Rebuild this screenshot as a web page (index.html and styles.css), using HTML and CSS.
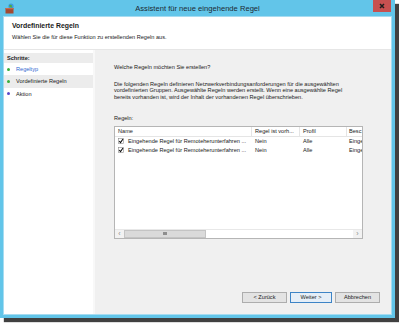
FILE: index.html
```html
<!DOCTYPE html>
<html lang="de">
<head>
  <meta charset="UTF-8">
  <title>Assistent für neue eingehende Regel</title>
  <link rel="stylesheet" href="styles.css">
</head>
<body>
  <div class="window">
    <div class="titlebar">
      <svg class="app-icon" width="10" height="11" viewBox="0 0 10 11">
        <circle cx="6" cy="3.2" r="2.6" fill="#3d9be0"/>
        <path d="M4.2 2.2 Q5.6 1 7 2.4 Q6.2 3.6 7.6 4.4 Q5.4 5 4.4 3.6 Z" fill="#4caf3e"/>
        <rect x="0.5" y="5" width="8" height="5.5" fill="#a34a32"/>
        <rect x="0.5" y="5" width="8" height="1.2" fill="#c9694c"/>
      </svg>
      <div class="title">Assistent für neue eingehende Regel</div>
      <div class="close">
        <svg width="6" height="6" viewBox="0 0 6 6">
          <path d="M1 1 L5 5 M5 1 L1 5" stroke="#1e1e1e" stroke-width="1.5"/>
        </svg>
      </div>
    </div>

    <div class="frame">
      <div class="head">
        <div class="head-title">Vordefinierte Regeln</div>
        <div class="head-sub">Wählen Sie die für diese Funktion zu erstellenden Regeln aus.</div>
      </div>

      <div class="body">
        <div class="steps">
          <div class="steps-title">Schritte:</div>
          <div class="step link"><span class="dot green"></span>Regeltyp</div>
          <div class="step current"><span class="dot green"></span>Vordefinierte Regeln</div>
          <div class="step"><span class="dot purple"></span>Aktion</div>
        </div>

        <div class="main">
          <p class="question">Welche Regeln möchten Sie erstellen?</p>
          <p class="info">Die folgenden Regeln definieren Netzwerkverbindungsanforderungen für die ausgewählten<br>vordefinierten Gruppen. Ausgewählte Regeln werden erstellt. Wenn eine ausgewählte Regel<br>bereits vorhanden ist, wird der Inhalt der vorhandenen Regel überschrieben.</p>
          <div class="label">Regeln:</div>

          <div class="list">
            <div class="row list-head">
              <div class="col c1">Name</div>
              <div class="col c2">Regel ist vorh...</div>
              <div class="col c3">Profil</div>
              <div class="col c4">Besc</div>
            </div>
            <div class="row">
              <div class="col c1">
                <svg class="check" width="6" height="6" viewBox="0 0 6 6">
                  <rect x="0.5" y="0.5" width="5" height="5" fill="#fff" stroke="#8a8a8a" stroke-width="0.6"/>
                  <path d="M1.2 3 L2.5 4.5 L5 1" fill="none" stroke="#111" stroke-width="1.1"/>
                </svg>Eingehende Regel für Remoteherunterfahren ...</div>
              <div class="col c2">Nein</div>
              <div class="col c3">Alle</div>
              <div class="col c4">Einge</div>
            </div>
            <div class="row">
              <div class="col c1">
                <svg class="check" width="6" height="6" viewBox="0 0 6 6">
                  <rect x="0.5" y="0.5" width="5" height="5" fill="#fff" stroke="#8a8a8a" stroke-width="0.6"/>
                  <path d="M1.2 3 L2.5 4.5 L5 1" fill="none" stroke="#111" stroke-width="1.1"/>
                </svg>Eingehende Regel für Remoteherunterfahren ...</div>
              <div class="col c2">Nein</div>
              <div class="col c3">Alle</div>
              <div class="col c4">Einge</div>
            </div>
            <div class="list-fill"></div>
            <div class="hscroll">
              <div class="arrow">&#8249;</div>
              <div class="track">
                <div class="thumb"><span class="grip"></span></div>
              </div>
              <div class="arrow">&#8250;</div>
            </div>
          </div>

          <div class="buttons">
            <div class="btn back">&lt; Zurück</div>
            <div class="btn next">Weiter &gt;</div>
            <div class="btn cancel">Abbrechen</div>
          </div>
        </div>
      </div>
    </div>
  </div>
</body>
</html>
```

FILE: styles.css
```css
* {
  margin: 0;
  padding: 0;
  box-sizing: border-box;
}
body {
  width: 399px;
  height: 323px;
  background: #fff;
  font-family: 'Liberation Sans', Arial, sans-serif;
  font-size: 5.6px;
  color: #1a1a1a;
  overflow: hidden;
}
.window {
  width: 395px;
  height: 318px;
  background: #62c5e9;
  display: flex;
  flex-direction: column;
  box-shadow: 4px 4px 1px rgba(30, 30, 30, 0.85);
}
.titlebar {
  height: 17px;
  display: grid;
  grid-template-columns: 1fr auto 1fr;
  align-items: start;
}
.app-icon {
  margin: 3px 0 0 5px;
}
.title {
  font-size: 7.6px;
  line-height: 17px;
  color: #1c2a33;
}
.close {
  justify-self: end;
  width: 18px;
  height: 12px;
  margin-right: 4px;
  background: #c75050;
  display: flex;
  align-items: center;
  justify-content: center;
}
.frame {
  flex: 1;
  margin: 0 4px 4px 4px;
  display: flex;
  flex-direction: column;
  box-shadow: 0 0 0 1px #a6dcf1;
}
.head {
  height: 33px;
  background: #fff;
  padding: 4px 8px 0;
  border-bottom: 1px solid #e6e6e6;
}
.head-title {
  font-weight: bold;
  font-size: 6.9px;
  line-height: 9px;
}
.head-sub {
  margin-top: 4px;
  line-height: 7px;
}
.body {
  flex: 1;
  display: flex;
}
.steps {
  width: 91px;
  background: #fff;
  border-right: 2px solid #f8f8f8;
  padding-top: 3px;
}
.steps-title {
  height: 10px;
  line-height: 10px;
  background: #ececec;
  font-weight: bold;
  padding-left: 3px;
}
.step {
  height: 12.3px;
  line-height: 12.3px;
  padding-left: 3px;
  display: flex;
  align-items: center;
}
.step.link {
  color: #2f68d0;
}
.step.current {
  background: #ececec;
}
.dot {
  width: 3px;
  height: 3px;
  border-radius: 50%;
  margin-right: 6px;
}
.dot.green {
  background: #3aae3a;
}
.dot.purple {
  background: #5848c8;
}
.main {
  flex: 1;
  background: #f0f0f0;
  padding: 14px 11px 11px 19px;
  display: flex;
  flex-direction: column;
}
.question {
  line-height: 7px;
}
.info {
  margin-top: 10px;
  line-height: 6.3px;
}
.label {
  margin-top: 15.5px;
  line-height: 7px;
}
.list {
  margin-top: 3.5px;
  width: 249px;
  height: 113px;
  background: #fff;
  border: 1px solid #b5b5b5;
  display: flex;
  flex-direction: column;
  overflow: hidden;
}
.row {
  display: flex;
  height: 9px;
  line-height: 9px;
  white-space: nowrap;
}
.list-head {
  height: 10px;
  line-height: 10px;
  border-bottom: 1px solid #e5e5e5;
}
.col {
  padding-left: 3px;
  overflow: hidden;
  display: flex;
  align-items: center;
}
.list-head .col {
  border-right: 1px solid #e5e5e5;
}
.c1 {
  width: 137px;
  flex: none;
}
.c2 {
  width: 48px;
  flex: none;
}
.c3 {
  width: 47px;
  flex: none;
}
.c4 {
  flex: 1;
  padding-left: 2px;
}
.list-head .c4 {
  border-right: none;
}
.check {
  margin-right: 4px;
  flex: none;
}
.list-fill {
  flex: 1;
}
.hscroll {
  height: 9px;
  display: flex;
  background: #fff;
  border-top: 1px solid #e8e8e8;
}
.arrow {
  width: 9px;
  font-size: 7px;
  line-height: 8px;
  text-align: center;
  color: #8a8a8a;
  background: #f2f2f2;
}
.track {
  flex: 1;
  background: #fff;
}
.thumb {
  width: 82px;
  height: 8px;
  background: #dadada;
  border: 1px solid #c4c4c4;
  display: flex;
  align-items: center;
  justify-content: center;
}
.grip {
  width: 4px;
  height: 3px;
  background: #8e8e8e;
}
.buttons {
  margin-top: auto;
  display: flex;
  justify-content: flex-end;
  gap: 3px;
}
.btn {
  height: 11px;
  line-height: 9px;
  text-align: center;
  background: #e3e3e3;
  border: 1px solid #adadad;
}
.back {
  width: 45px;
}
.next {
  width: 42px;
  border-color: #3d84c6;
  background: #e5eef7;
}
.cancel {
  width: 45px;
}
```
